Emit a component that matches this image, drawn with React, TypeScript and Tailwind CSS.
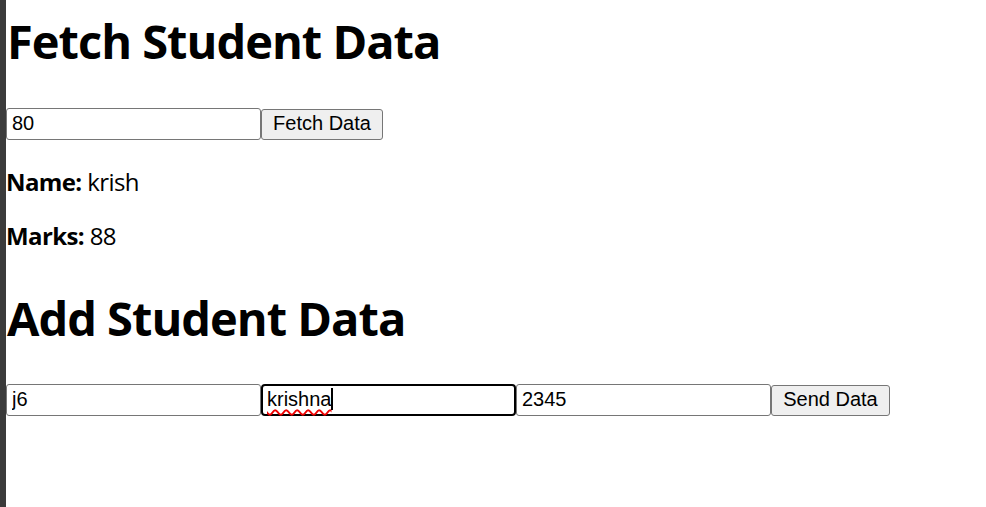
import { useState } from "react";

const Field = ({ value, w = "w-[255px]" }: { value: string; w?: string }) => (
    <input
        readOnly
        value={value}
        className={`${w} h-[32px] border border-[#767676] rounded-[3px] bg-white px-[5px] pb-[2px] text-[20px] text-black outline-none font-['Liberation_Sans',Arial,sans-serif]`}
    />
);

const Btn = ({ label, w }: { label: string; w: string }) => (
    <button
        className={`${w} h-[31px] flex items-center justify-center pb-[4px] leading-[24px] border border-[#767676] rounded-[3px] bg-[#efefef] text-[20px] text-black font-['Liberation_Sans',Arial,sans-serif]`}
    >
        {label}
    </button>
);

export default function App() {
    const [id] = useState("80");

    return (
        <div className="flex w-full h-[507px] bg-white overflow-hidden">
            <div className="w-[6px] h-full bg-[#3b3b3b] shrink-0" />

            <div className="flex flex-col pt-[9px] font-['Open_Sans','Noto_Sans',sans-serif] text-black">
                {/* Fetch */}
                <h1 className="text-[47px] leading-[64px] font-bold tracking-[-1px] pl-[1px]">
                    Fetch Student Data
                </h1>

                <div className="flex items-end mt-[35px]">
                    <Field value={id} />
                    <Btn label="Fetch Data" w="w-[122px]" />
                </div>

                <p className="text-[24px] leading-[32px] mt-[26px] tracking-[-0.6px]">
                    <b>Name:</b> krish
                </p>
                <p className="text-[24px] leading-[32px] mt-[22px] tracking-[-0.6px]">
                    <b>Marks:</b> 88
                </p>

                {/* Add */}
                <h1 className="text-[47px] leading-[64px] font-bold tracking-[-1px] mt-[34px] pl-[1px]">
                    Add Student Data
                </h1>

                <div className="flex items-end mt-[34px]">
                    <Field value="j6" />
                    <div className="w-[255px] h-[32px] border-2 border-black rounded-[4px] bg-white pl-[4px] pb-[2px] flex items-center text-[20px] font-['Liberation_Sans',Arial,sans-serif]">
                        <span className="underline decoration-wavy decoration-[#e00] decoration-[1.5px] underline-offset-[3px]">
                            krishna
                        </span>
                        <span className="w-[1.5px] h-[22px] bg-black" />
                    </div>
                    <Field value="2345" />
                    <Btn label="Send Data" w="w-[119px]" />
                </div>
            </div>
        </div>
    );
}
